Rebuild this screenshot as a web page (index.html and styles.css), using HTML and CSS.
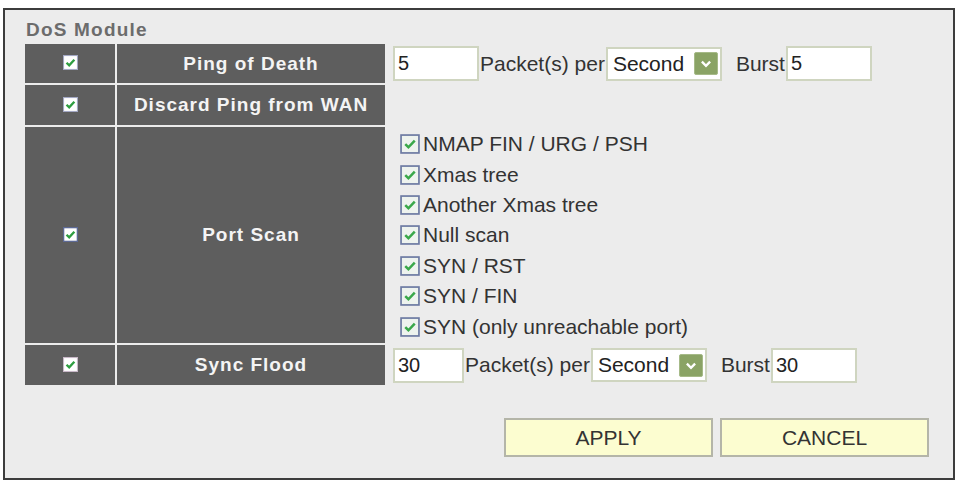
FILE: index.html
```html
<!DOCTYPE html>
<html lang="en">
<head>
    <meta charset="UTF-8">
    <title>DoS Module</title>
    <link rel="stylesheet" href="styles.css">
</head>
<body>
    <div class="frame">
        <div class="title">DoS Module</div>

        <table class="dos">
            <!-- Ping of Death -->
            <tr class="row-short">
                <td class="sel">
                    <svg class="cb-sm" viewBox="0 0 14 14"><rect x="0.5" y="0.5" width="13" height="13" fill="#fff" stroke="#a3a8c4"/><path d="M3.3 7.2l2.5 2.5 4.8-5.2" fill="none" stroke="#2f9e42" stroke-width="2.2"/></svg>
                </td>
                <td class="name">Ping of Death</td>
                <td class="opt">
                    <div class="line">
                        <input class="num" type="text" value="5">
                        <span class="lbl">Packet(s) per</span>
                        <div class="select">
                            <span>Second</span>
                            <span class="arrow"><svg viewBox="0 0 23 23"><path d="M7 9.5l4.5 4.5 4.5-4.5" fill="none" stroke="#fff" stroke-width="2.6"/></svg></span>
                        </div>
                        <span class="lbl burst">Burst</span>
                        <input class="num" type="text" value="5">
                    </div>
                </td>
            </tr>

            <!-- Discard Ping from WAN -->
            <tr class="row-short">
                <td class="sel">
                    <svg class="cb-sm" viewBox="0 0 14 14"><rect x="0.5" y="0.5" width="13" height="13" fill="#fff" stroke="#a3a8c4"/><path d="M3.3 7.2l2.5 2.5 4.8-5.2" fill="none" stroke="#2f9e42" stroke-width="2.2"/></svg>
                </td>
                <td class="name">Discard Ping from WAN</td>
                <td class="opt"></td>
            </tr>

            <!-- Port Scan -->
            <tr class="row-tall">
                <td class="sel">
                    <svg class="cb-sm" viewBox="0 0 14 14"><rect x="0.5" y="0.5" width="13" height="13" fill="#fff" stroke="#5d6a96" stroke-width="1.4"/><path d="M3.3 7.2l2.5 2.5 4.8-5.2" fill="none" stroke="#2f9e42" stroke-width="2.2"/></svg>
                </td>
                <td class="name">Port Scan</td>
                <td class="opt">
                    <ul class="scans">
                        <li><svg class="cb" viewBox="0 0 19 19"><rect x="1" y="1" width="17" height="17" fill="#eef3ee" stroke="#6d7aa2" stroke-width="1.6"/><path d="M5 9.6l3 3 6-6.4" fill="none" stroke="#3aa84a" stroke-width="2.4"/></svg>NMAP FIN / URG / PSH</li>
                        <li><svg class="cb" viewBox="0 0 19 19"><rect x="1" y="1" width="17" height="17" fill="#eef3ee" stroke="#6d7aa2" stroke-width="1.6"/><path d="M5 9.6l3 3 6-6.4" fill="none" stroke="#3aa84a" stroke-width="2.4"/></svg>Xmas tree</li>
                        <li><svg class="cb" viewBox="0 0 19 19"><rect x="1" y="1" width="17" height="17" fill="#eef3ee" stroke="#6d7aa2" stroke-width="1.6"/><path d="M5 9.6l3 3 6-6.4" fill="none" stroke="#3aa84a" stroke-width="2.4"/></svg>Another Xmas tree</li>
                        <li><svg class="cb" viewBox="0 0 19 19"><rect x="1" y="1" width="17" height="17" fill="#eef3ee" stroke="#6d7aa2" stroke-width="1.6"/><path d="M5 9.6l3 3 6-6.4" fill="none" stroke="#3aa84a" stroke-width="2.4"/></svg>Null scan</li>
                        <li><svg class="cb" viewBox="0 0 19 19"><rect x="1" y="1" width="17" height="17" fill="#eef3ee" stroke="#6d7aa2" stroke-width="1.6"/><path d="M5 9.6l3 3 6-6.4" fill="none" stroke="#3aa84a" stroke-width="2.4"/></svg>SYN / RST</li>
                        <li><svg class="cb" viewBox="0 0 19 19"><rect x="1" y="1" width="17" height="17" fill="#eef3ee" stroke="#6d7aa2" stroke-width="1.6"/><path d="M5 9.6l3 3 6-6.4" fill="none" stroke="#3aa84a" stroke-width="2.4"/></svg>SYN / FIN</li>
                        <li><svg class="cb" viewBox="0 0 19 19"><rect x="1" y="1" width="17" height="17" fill="#eef3ee" stroke="#6d7aa2" stroke-width="1.6"/><path d="M5 9.6l3 3 6-6.4" fill="none" stroke="#3aa84a" stroke-width="2.4"/></svg>SYN (only unreachable port)</li>
                    </ul>
                </td>
            </tr>

            <!-- Sync Flood -->
            <tr class="row-short">
                <td class="sel">
                    <svg class="cb-sm" viewBox="0 0 14 14"><rect x="0.5" y="0.5" width="13" height="13" fill="#fff" stroke="#c8b8c8"/><path d="M3.3 7.2l2.5 2.5 4.8-5.2" fill="none" stroke="#2f9e42" stroke-width="2.2"/></svg>
                </td>
                <td class="name">Sync Flood</td>
                <td class="opt">
                    <div class="line">
                        <input class="num num-short" type="text" value="30">
                        <span class="lbl">Packet(s) per</span>
                        <div class="select">
                            <span>Second</span>
                            <span class="arrow"><svg viewBox="0 0 23 23"><path d="M7 9.5l4.5 4.5 4.5-4.5" fill="none" stroke="#fff" stroke-width="2.6"/></svg></span>
                        </div>
                        <span class="lbl burst">Burst</span>
                        <input class="num" type="text" value="30">
                    </div>
                </td>
            </tr>
        </table>

        <div class="actions">
            <button class="btn">APPLY</button>
            <button class="btn">CANCEL</button>
        </div>
    </div>
</body>
</html>
```

FILE: styles.css
```css
body {
    margin: 0;
    padding: 0;
    background: #fff;
    font-family: "Liberation Sans", Arial, sans-serif;
    color: #333;
}
.frame {
    margin: 8px 0 0 3px;
    width: 948px;
    height: 468px;
    border: 2px solid #3c3c3c;
    background-color: #ececec;
}
.title {
    padding: 9px 0 0 21px;
    height: 23px;
    line-height: 22px;
    font-size: 19px;
    font-weight: bold;
    letter-spacing: 1.2px;
    color: #6c6c6c;
}
.dos {
    margin-left: 18px;
    border-collapse: separate;
    border-spacing: 2px;
}
.dos td {
    padding: 0;
}
.row-short td {
    height: 39px;
}
.row-short + .row-short td,
.row-tall + .row-short td {
    height: 40px;
}
.row-tall td {
    height: 216px;
}
.sel {
    width: 90px;
    background-color: #5e5e5e;
    text-align: center;
    vertical-align: middle;
}
.name {
    width: 268px;
    background-color: #5e5e5e;
    color: #f4f4f4;
    font-size: 19px;
    font-weight: bold;
    letter-spacing: 1px;
    text-align: center;
    vertical-align: middle;
}
.opt {
    width: 540px;
    vertical-align: middle;
}
.cb-sm {
    display: block;
    width: 15px;
    height: 15px;
    margin: 0 auto;
    position: relative;
    top: -1px;
}
.line {
    display: flex;
    align-items: center;
    padding-left: 6px;
    font-size: 21px;
}
.num {
    box-sizing: border-box;
    width: 86px;
    height: 35px;
    border: 2px solid #cfd5c0;
    background: #fff;
    padding: 0 0 0 3px;
    font-family: "Liberation Sans", Arial, sans-serif;
    font-size: 20px;
    color: #222;
    outline: none;
}
.num-short {
    width: 71px;
}
.lbl {
    margin-left: 1px;
    color: #333;
}
.burst {
    margin-left: 14px;
    margin-right: 1px;
}
.select {
    box-sizing: border-box;
    width: 116px;
    height: 34px;
    margin-left: 1px;
    border: 2px solid #cfd5c0;
    background: #fff;
    display: flex;
    align-items: center;
    justify-content: space-between;
    padding: 0 2px 0 5px;
    color: #222;
}
.arrow {
    width: 24px;
    height: 23px;
    box-sizing: border-box;
    border: 1px solid #a6ba88;
    border-radius: 2px;
    background-color: #8aa365;
}
.arrow svg {
    display: block;
    width: 22px;
    height: 21px;
}
.scans {
    list-style: none;
    margin: 0;
    padding: 1px 0 0 13px;
    font-size: 21px;
}
.scans li {
    display: flex;
    align-items: center;
    height: 30.4px;
}
.cb {
    width: 20px;
    height: 20px;
    margin-right: 3px;
    flex-shrink: 0;
}
.actions {
    display: flex;
    justify-content: flex-end;
    gap: 7px;
    margin-top: 31px;
    padding-right: 24px;
}
.btn {
    box-sizing: border-box;
    width: 209px;
    height: 39px;
    border: 2px solid #b4b5a8;
    background-color: #fcfdd0;
    font-family: "Liberation Sans", Arial, sans-serif;
    font-size: 21px;
    color: #333;
    padding: 0;
}
```
